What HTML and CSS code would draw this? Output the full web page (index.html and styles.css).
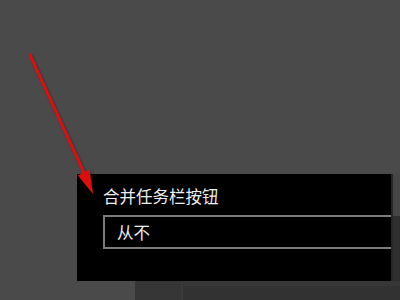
FILE: index.html
```html
<!DOCTYPE html>
<html lang="zh-CN">
<head>
  <meta charset="UTF-8" />
  <title>合并任务栏按钮</title>
  <link rel="stylesheet" href="styles.css">
</head>
<body>
  <div class="stage">
    <div class="row">
      <div class="gap-left"></div>
      <div class="panel">
        <p class="label">合并任务栏按钮</p>
        <div class="select">从不</div>
      </div>
      <div class="side"><div class="side-top"></div></div>
    </div>
    <div class="bottom">
      <div class="bottom-light"></div>
      <div class="bottom-a"></div>
      <div class="bottom-b"></div>
    </div>
  </div>

  <!-- annotation arrow over the panel -->
  <svg class="arrow" width="400" height="300" viewBox="0 0 400 300">
    <defs>
      <filter id="sh" x="-20%" y="-20%" width="140%" height="140%">
        <feDropShadow dx="1" dy="1" stdDeviation="1" flood-color="#000" flood-opacity="0.45"/>
      </filter>
    </defs>
    <g filter="url(#sh)">
      <line x1="30" y1="55" x2="85" y2="175" stroke="#e01010" stroke-width="3" stroke-linecap="round"/>
      <polygon points="93,194 78,175.5 89.5,170" fill="#e01010"/>
    </g>
  </svg>
</body>
</html>
```

FILE: styles.css
```css
* { margin: 0; padding: 0; box-sizing: border-box; }
body { width: 400px; height: 300px; overflow: hidden; background: #4a4a4a; font-family: "Noto Sans CJK SC", "Microsoft YaHei", sans-serif; color: #fff; }
.stage { padding-top: 174px; }
.row { display: flex; height: 107px; }
.gap-left { width: 77px; }
.panel { width: 314px; background: #000; padding: 14px 0 0 26px; overflow: hidden; }
.label { font-size: 16.5px; line-height: 16px; margin-bottom: 11px; color: #ededed; }
.select { width: 320px; height: 34px; border: 2px solid #7c7c7c; padding: 7px 12px; font-size: 16.5px; line-height: 16px; color: #ededed; }
.side { flex: 1; background: #2f2f2f; border-left: 2px solid #262626; }
.side-top { height: 42px; background: #464646; }
.bottom { display: flex; height: 19px; }
.bottom-light { width: 135px; }
.bottom-a { width: 46px; background: #363636; }
.bottom-b { flex: 1; background: #323232; border-top: 5px solid #373737; border-left: 2px solid #3b3b3b; }
.arrow { position: absolute; top: 0; left: 0; }
```
